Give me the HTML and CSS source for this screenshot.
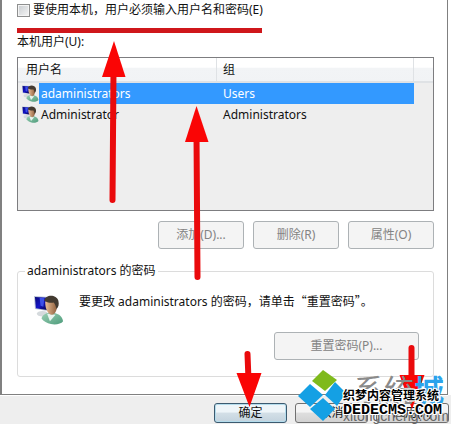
FILE: index.html
```html
<!DOCTYPE html>
<html lang="zh-CN">
<head>
    <meta charset="UTF-8">
    <meta name="viewport" content="width=device-width, initial-scale=1.0">
    <title>用户帐户</title>
    <link rel="stylesheet" href="styles.css">
</head>
<body>
    <!-- shared icon -->
    <svg class="defs" aria-hidden="true">
        <defs>
            <linearGradient id="screen" x1="0" y1="0" x2="1" y2="1">
                <stop offset="0" stop-color="#0a0a78"/>
                <stop offset="0.5" stop-color="#1414c8"/>
                <stop offset="1" stop-color="#06063c"/>
            </linearGradient>
            <linearGradient id="face" x1="0" y1="0" x2="1" y2="0">
                <stop offset="0" stop-color="#e9bd96"/>
                <stop offset="1" stop-color="#8c5c3a"/>
            </linearGradient>
            <linearGradient id="shirt" x1="0" y1="0" x2="1" y2="1">
                <stop offset="0" stop-color="#9bd0b4"/>
                <stop offset="1" stop-color="#4e9c7c"/>
            </linearGradient>
            <symbol id="user" viewBox="0 0 32 32">
                <ellipse cx="9" cy="20" rx="6" ry="3" fill="#d5dadd"/>
                <path d="M0 1l16 1-1 15L1 15z" fill="#b9c3d6"/>
                <path d="M1 2l14 1-1 13L2 14z" fill="url(#screen)"/>
                <path d="M6 3l5 .500-1 9-3-1z" fill="#3c50e8"/>
                <path d="M8 25c1-4 5-6 10-6 7 0 12 3 13 9-2 3-8 4-13 3-4-1-8-3-10-6z" fill="url(#shirt)"/>
                <path d="M14 20l3 8 6-7z" fill="#e8f4ef"/>
                <path d="M12 8c0-5 12-5 13 0 0 7-2 13-6 13s-7-6-7-13z" fill="url(#face)"/>
                <path d="M11 6c1-7 13-7 15 0 1 4 0 7-2 9-1-3-1-5-3-7-3 1-6 0-10-2z" fill="#433a30"/>
            </symbol>
        </defs>
    </svg>

    <main class="dialog">
        <section class="panel">
            <label class="require-login">
                <input type="checkbox">
                <span>要使用本机，用户必须输入用户名和密码(E)</span>
            </label>
            <p class="list-title">本机用户(U):</p>

            <div class="user-list">
                <table>
                    <colgroup>
                        <col class="col-icon">
                        <col class="col-name">
                        <col>
                        <col class="col-end">
                    </colgroup>
                    <thead>
                        <tr>
                            <th colspan="2">用户名</th>
                            <th>组</th>
                            <th></th>
                        </tr>
                    </thead>
                    <tbody>
                        <tr class="selected">
                            <td><svg class="icon-small"><use href="#user"/></svg></td>
                            <td>adaministrators</td>
                            <td>Users</td>
                            <td></td>
                        </tr>
                        <tr>
                            <td><svg class="icon-small"><use href="#user"/></svg></td>
                            <td>Administrator</td>
                            <td>Administrators</td>
                            <td></td>
                        </tr>
                    </tbody>
                </table>
            </div>

            <div class="list-actions">
                <button type="button" disabled>添加(D)...</button>
                <button type="button" disabled>删除(R)</button>
                <button type="button" disabled>属性(O)</button>
            </div>

            <fieldset class="password-box">
                <legend>adaministrators 的密码</legend>
                <div class="password-info">
                    <svg class="icon-large"><use href="#user"/></svg>
                    <p>要更改 adaministrators 的密码，请单击<span class="quoted">“重置密码”</span>。</p>
                </div>
                <button type="button" class="reset" disabled>重置密码(P)...</button>
            </fieldset>
        </section>

        <footer class="dialog-buttons">
            <button type="button" class="primary">确定</button>
            <button type="button">取消</button>
            <button type="button">应用(A)</button>
        </footer>

        <!-- red marks -->
        <svg class="marks" viewBox="0 0 451 424" aria-hidden="true">
            <path d="M17 30.500H262" stroke="#cf171b" stroke-width="5"/>
            <g stroke="#ea0a0c" stroke-width="6" stroke-linecap="round">
                <path d="M113.500 70L112.500 200"/>
                <path d="M196.500 135L197.500 277"/>
                <path d="M247.500 354L248.500 380"/>
                <path d="M411.500 348V376"/>
            </g>
            <g fill="#fa0505">
                <path d="M114 41L125.500 77H102z"/>
                <path d="M196.500 106L208.500 142H185z"/>
                <path d="M236.500 373H261.500L249.500 407z"/>
                <path d="M399.500 375H424.500L412 409z"/>
            </g>
        </svg>

        <div class="watermark">
            <svg class="watermark-logo" viewBox="0 0 48 52" aria-hidden="true">
                <path d="M25 0L39 10 27 21 14 11z" fill="#7fba1c"/>
                <path d="M12 14L25 25 12 37 0 26z" fill="#14a0e4"/>
                <path d="M37 12L48 23 39 36 27 25z" fill="#14a0e4"/>
                <path d="M25 28L37 39 25 51 12 39z" fill="#14a0e4"/>
            </svg>
            <span class="site-name">系统<b>城</b></span>
            <span class="site-url">xitongcheng.com</span>
            <span class="cms-name">织梦内容管理系统</span>
            <span class="cms-url">DEDECMS.COM</span>
        </div>
    </main>
</body>
</html>
```

FILE: styles.css
```css
* {
    margin: 0;
    padding: 0;
    box-sizing: border-box;
}

body {
    background-color: #eee;
    font-family: "Noto Sans", "Noto Sans CJK SC", sans-serif;
    font-size: 12px;
    line-height: 20px;
    color: #111;
}

.defs {
    position: absolute;
    width: 0;
    height: 0;
}

.dialog {
    position: relative;
    overflow: hidden;
    min-height: 100vh;
}

.panel {
    margin-right: 3px;
    padding: 0 13px 17px 15px;
    border: solid #808080;
    border-width: 0 1px 1px 2px;
    background-color: #fff;
    box-shadow: 0 1px 0 #fff, 3px 0 0 #fff;
}

.require-login {
    display: flex;
    align-items: center;
    gap: 3px;
}

.require-login input {
    appearance: none;
    width: 13px;
    height: 13px;
    border: 1px solid #8e8f8f;
    background: linear-gradient(135deg, #c8ccd0, #f6f6f6);
    box-shadow: inset 0 0 0 1px #f4f4f4;
}

.list-title {
    margin-top: 12px;
}

.user-list {
    height: 154px;
    margin-top: 5px;
    border: 1px solid #7d7d80;
    background-color: #eee;
}

.user-list table {
    width: 100%;
    table-layout: fixed;
    border-collapse: separate;
    border-spacing: 0;
}

.col-icon {
    width: 21px;
}

.col-name {
    width: 178px;
}

.col-end {
    width: 19px;
}

.user-list th {
    height: 25px;
    padding-left: 8px;
    border-right: 1px solid #dfe2e5;
    border-bottom: 2px solid #dfe2e5;
    background: linear-gradient(#fff 40%, #f2f4f6 45%, #f1f3f5);
    font-weight: normal;
    text-align: left;
}

.user-list th:nth-child(2) {
    padding-left: 6px;
}

.user-list th:last-child {
    border-right: 0;
}

.user-list td {
    height: 21px;
    padding-left: 6px;
}

.user-list td:nth-child(2) {
    padding-left: 2px;
}

.user-list td:first-child {
    padding-left: 4px;
}

.selected td:nth-child(2),
.selected td:nth-child(3) {
    background-color: #3399ff;
    color: #fff;
}

.icon-small {
    display: block;
    width: 17px;
    height: 17px;
}

button {
    height: 20px;
    border: 1px solid #707070;
    border-radius: 3px;
    background: linear-gradient(#f4f4f4 45%, #dedede 50%, #d2d2d2);
    font: inherit;
    line-height: 16px;
    color: #111;
}

button:disabled {
    height: 28px;
    border-color: #adb2b5;
    background: #f4f4f4;
    color: #838383;
}

.list-actions {
    display: flex;
    justify-content: flex-end;
    gap: 9px;
    margin-top: 10px;
}

.list-actions button {
    width: 86px;
}

.password-box {
    display: flex;
    flex-direction: column;
    margin-top: 12px;
    padding: 10px 14px 16px 16px;
    border: 1px solid #dcdcdc;
    border-radius: 3px;
}

.password-box legend {
    margin-left: -9px;
    padding: 0 2px;
}

.password-info {
    display: flex;
    gap: 15px;
}

.quoted {
    font-family: "Noto Sans CJK SC", sans-serif;
}

.icon-large {
    flex: none;
    width: 30px;
    height: 32px;
    margin-top: 3px;
}

.reset {
    align-self: flex-end;
    width: 145px;
    margin-top: 6px;
}

.dialog-buttons {
    display: flex;
    justify-content: flex-end;
    gap: 8px;
    padding: 8px 2px 1px;
}

.dialog-buttons button {
    width: 73px;
}

.dialog-buttons .primary {
    border-color: #3c5a70;
    background: linear-gradient(#eef5f9 45%, #d3dfe7 50%, #c3d3de);
    box-shadow: inset 0 0 0 1px #b4dcec;
}

.marks {
    position: absolute;
    top: 0;
    left: 0;
    width: 451px;
    height: 424px;
    fill: none;
    pointer-events: none;
}

.watermark {
    position: absolute;
    top: 370px;
    left: 298px;
    width: 153px;
    height: 54px;
    white-space: nowrap;
    pointer-events: none;
}

.watermark span,
.watermark-logo {
    position: absolute;
}

.watermark-logo {
    top: 0;
    left: 0;
    width: 48px;
    height: 52px;
}

.watermark .site-name {
    top: 4px;
    left: 56px;
    font-size: 30px;
    line-height: 32px;
    color: #8a8a8a;
}

.site-name b {
    color: #2ba3ec;
}

.watermark .site-url {
    top: 39px;
    left: 45px;
    font-family: "Liberation Sans", sans-serif;
    font-size: 14px;
    line-height: 15px;
    color: #666;
}

.cms-name,
.cms-url {
    left: 45px;
    font-weight: bold;
    line-height: 16px;
    color: #000;
    text-shadow: 1px 0 #fff, -1px 0 #fff, 0 1px #fff, 0 -1px #fff, 1px 1px #fff, -1px -1px #fff, 1px -1px #fff, -1px 1px #fff;
}

.cms-name {
    top: 18px;
}

.cms-url {
    top: 33px;
    font-family: "Liberation Mono", monospace;
    font-size: 15px;
}
```
